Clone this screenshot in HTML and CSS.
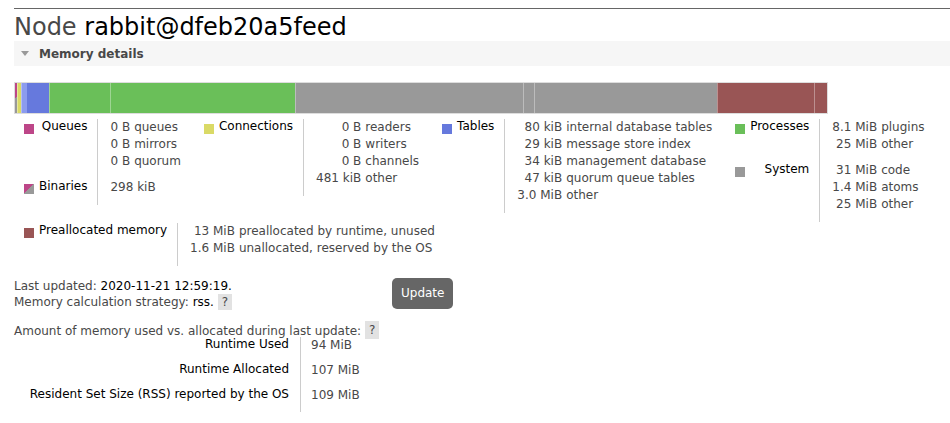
FILE: index.html
```html
<!DOCTYPE html>
<html>
<head>
<meta charset="utf-8">
<title>Node rabbit@dfeb20a5feed</title>
<link rel="stylesheet" href="styles.css">
</head>
<body>
<div class="page">
  <h1 class="title">Node <b>rabbit@dfeb20a5feed</b></h1>
  <div class="section-head"><span class="tri"></span>Memory details</div>

  <div class="bar">
    <div class="seg nb c-binary" style="width:2px"></div>
    <div class="seg c-conn" style="width:4px"></div>
    <div class="seg c-table-light" style="width:6px"></div>
    <div class="seg nb c-table" style="width:22px"></div>
    <div class="seg c-proc" style="width:61px"></div>
    <div class="seg c-proc" style="width:185px"></div>
    <div class="seg c-sys" style="width:228px"></div>
    <div class="seg c-sys" style="width:11px"></div>
    <div class="seg c-sys" style="width:183px"></div>
    <div class="seg c-unused" style="width:97px"></div>
    <div class="seg c-unused" style="width:13px"></div>
  </div>

  <div class="legend">
    <div class="facts">
      <div class="key"><span class="sw c-queue"></span><span>Queues</span></div>
      <div class="val">
        <div class="mini">
          <span>0 B</span><span>queues</span>
          <span>0 B</span><span>mirrors</span>
          <span>0 B</span><span>quorum</span>
        </div>
      </div>
      <div class="key"><span class="sw c-binary"></span><span>Binaries</span></div>
      <div class="val">
        <div class="mini"><span>298 kiB</span><span></span></div>
      </div>
    </div>

    <div class="facts">
      <div class="key"><span class="sw c-conn"></span><span>Connections</span></div>
      <div class="val">
        <div class="mini">
          <span>0 B</span><span>readers</span>
          <span>0 B</span><span>writers</span>
          <span>0 B</span><span>channels</span>
          <span>481 kiB</span><span>other</span>
        </div>
      </div>
    </div>

    <div class="facts">
      <div class="key"><span class="sw c-table"></span><span>Tables</span></div>
      <div class="val">
        <div class="mini">
          <span>80 kiB</span><span>internal database tables</span>
          <span>29 kiB</span><span>message store index</span>
          <span>34 kiB</span><span>management database</span>
          <span>47 kiB</span><span>quorum queue tables</span>
          <span>3.0 MiB</span><span>other</span>
        </div>
      </div>
    </div>

    <div class="facts">
      <div class="key"><span class="sw c-proc"></span><span>Processes</span></div>
      <div class="val">
        <div class="mini">
          <span>8.1 MiB</span><span>plugins</span>
          <span>25 MiB</span><span>other</span>
        </div>
      </div>
      <div class="key"><span class="sw c-sys"></span><span>System</span></div>
      <div class="val">
        <div class="mini">
          <span>31 MiB</span><span>code</span>
          <span>1.4 MiB</span><span>atoms</span>
          <span>25 MiB</span><span>other</span>
        </div>
      </div>
    </div>
  </div>

  <div class="legend2">
    <div class="facts">
      <div class="key"><span class="sw c-unused"></span><span>Preallocated memory</span></div>
      <div class="val">
        <div class="mini">
          <span>13 MiB</span><span>preallocated by runtime, unused</span>
          <span>1.6 MiB</span><span>unallocated, reserved by the OS</span>
        </div>
      </div>
    </div>
  </div>

  <div class="updated">
    <div class="updated-text">
      <p class="line">Last updated: <b>2020-11-21 12:59:19.</b></p>
      <p class="line">Memory calculation strategy: <b>rss.</b> <span class="help">?</span></p>
    </div>
    <button class="btn">Update</button>
  </div>

  <p class="amount">Amount of memory used vs. allocated during last update: <span class="help help-tall">?</span></p>
  <div class="alloc">
    <div class="akey">Runtime Used</div><div class="aval">94 MiB</div>
    <div class="akey">Runtime Allocated</div><div class="aval">107 MiB</div>
    <div class="akey">Resident Set Size (RSS) reported by the OS</div><div class="aval">109 MiB</div>
  </div>
</div>
</body>
</html>
```

FILE: styles.css
```css
* { box-sizing: border-box; }

body {
  margin: 0;
  font-family: "DejaVu Sans", Verdana, sans-serif;
  font-size: 12px;
  color: #484848;
  background: #fff;
}

b { font-weight: normal; color: #000; }

.page {
  margin: 8px 0 0 14px;
  border-top: 1px solid #666;
}

.title {
  margin: 0;
  padding-top: 5px;
  font-size: 24px;
  line-height: 27px;
  font-weight: normal;
  color: #484848;
}

.section-head {
  height: 25px;
  background: #f6f6f6;
  display: flex;
  align-items: center;
  padding-left: 7px;
  font-weight: bold;
  color: #484848;
}

.tri {
  width: 0;
  height: 0;
  border-left: 4px solid transparent;
  border-right: 4px solid transparent;
  border-top: 5px solid #999;
  margin-right: 10px;
}

.bar {
  margin-top: 16px;
  width: 814px;
  height: 32px;
  border: 1px solid #ddd;
  display: flex;
}

.seg {
  flex: none;
  height: 100%;
  border-left: 1px solid rgba(255, 255, 255, 0.35);
}
.seg.nb { border-left: 0; }

.c-queue { background: #bd4688; }
.c-binary { background: linear-gradient(135deg, #bd4688 50%, #999 50%); }
.c-conn { background: #dada66; }
.c-table-light { background: #8c9cee; }
.c-table { background: #6679dd; }
.c-proc { background: #6abf59; }
.c-sys { background: #999; }
.c-unused { background: #955; }

.legend {
  margin-top: 5px;
  padding-left: 10px;
  display: flex;
  align-items: flex-start;
  gap: 23px;
}

.legend2 {
  margin-top: 1px;
  padding-left: 10px;
  display: flex;
}

.facts {
  display: grid;
  grid-template-columns: auto auto;
}

.key {
  display: flex;
  justify-content: space-between;
  line-height: 14px;
  padding-right: 10px;
  color: #000;
  white-space: nowrap;
}

.sw {
  flex: none;
  width: 10px;
  height: 10px;
  margin-top: 5px;
  margin-right: 5px;
}

.val {
  border-left: 1px solid #ccc;
  padding: 0 0 9px 12px;
  line-height: 17px;
}

.mini {
  display: grid;
  grid-template-columns: auto auto;
  justify-content: start;
  column-gap: 4px;
  white-space: nowrap;
}
.mini span:nth-child(odd) { text-align: right; }

.updated {
  margin-top: 12px;
  display: flex;
  align-items: flex-start;
}

.updated-text { width: 378px; }

.line {
  margin: 0;
  line-height: 16px;
}

.help {
  display: inline-block;
  vertical-align: top;
  height: 16px;
  line-height: 16px;
  padding: 0 4px;
  background: #e2e2e2;
  color: #484848;
}

.help-tall {
  height: 18px;
  line-height: 18px;
  margin-top: -2px;
}

.btn {
  height: 31px;
  padding: 0 9px;
  border: 0;
  border-radius: 5px;
  background: #666;
  color: #fff;
  font-family: inherit;
  font-size: 12px;
  line-height: 31px;
}

.amount {
  margin: 13px 0 0;
  line-height: 16px;
  height: 16px;
}

.alloc {
  margin-top: -2px;
  display: grid;
  grid-template-columns: 286px auto;
}

.akey {
  text-align: right;
  padding: 0 11px 0 11px;
  line-height: 14px;
  color: #000;
  white-space: nowrap;
}

.aval {
  border-left: 1px solid #ccc;
  padding: 0 0 8px 10px;
  line-height: 17px;
}
```
